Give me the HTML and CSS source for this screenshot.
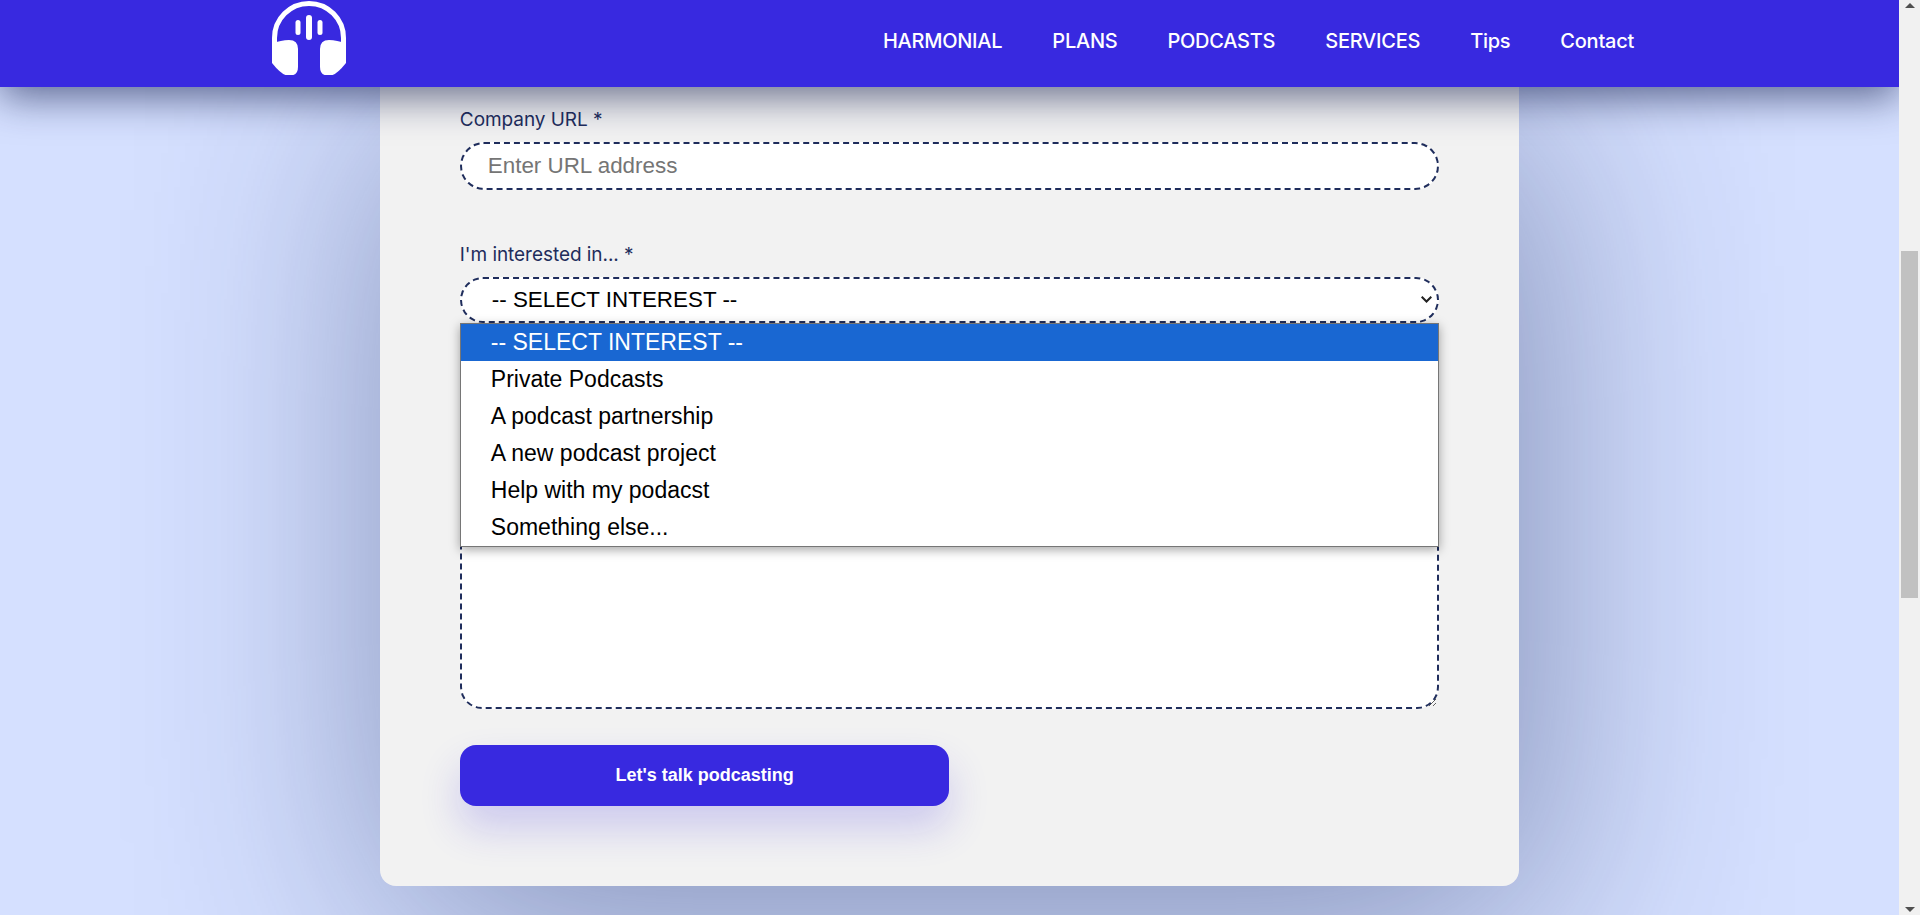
FILE: index.html
```html
<!DOCTYPE html>
<html lang="en">
<head>
<meta charset="utf-8">
<title>Harmonial - Contact</title>
<link rel="stylesheet" href="styles.css">
</head>
<body>
<div class="app">
  <div class="viewport">
    <header class="topbar">
      <a class="logo" href="#" aria-label="Harmonial">
        <svg width="74" height="74" viewBox="0 0 74 74" fill="#fff">
          <path d="M2.500 44V37a34.500 34.500 0 0 1 69 0V44" fill="none" stroke="#fff" stroke-width="5"/>
          <path d="M0 42.500Q9 39 17 39Q26 39 26 48V66Q26 74.500 18 74.500H16Q10 74.500 0 62Z"/>
          <path d="M74 42.500Q65 39 57 39Q48 39 48 48V66Q48 74.500 56 74.500H58Q64 74.500 74 62Z"/>
          <rect x="34" y="14" width="6" height="25" rx="3"/>
          <rect x="23.500" y="19" width="5" height="15" rx="2.500"/>
          <rect x="45.500" y="19" width="5" height="15" rx="2.500"/>
        </svg>
      </a>
      <nav class="nav">
        <a href="#">HARMONIAL</a>
        <a href="#">PLANS</a>
        <a href="#">PODCASTS</a>
        <a href="#">SERVICES</a>
        <a href="#">Tips</a>
        <a href="#">Contact</a>
      </nav>
    </header>
    <main class="content">
      <form class="card">
        <div class="field">
          <label class="label" for="url">Company URL *</label>
          <input class="control" id="url" type="text" placeholder="Enter URL address">
        </div>
        <div class="field field-select">
          <label class="label" for="interest">I'm interested in... *</label>
          <select class="control control-select" id="interest">
            <option>-- SELECT INTEREST --</option>
          </select>
          <svg class="chevron" width="11" height="7" viewBox="0 0 11 7" fill="none" stroke="#222" stroke-width="2"><path d="M.700 .700 5.500 5.500 10.300 .700"/></svg>
          <ul class="popup">
            <li class="selected">-- SELECT INTEREST --</li>
            <li>Private Podcasts</li>
            <li>A podcast partnership</li>
            <li>A new podcast project</li>
            <li>Help with my podacst</li>
            <li>Something else...</li>
          </ul>
        </div>
        <div class="field field-last">
          <textarea class="control control-area" aria-label="Message"></textarea>
        </div>
        <button class="submit" type="button">Let's talk podcasting</button>
      </form>
    </main>
  </div>
  <div class="scrollbar">
    <span class="arrow arrow-up"></span>
    <div class="track"><div class="thumb"></div></div>
    <span class="arrow arrow-down"></span>
  </div>
</div>
</body>
</html>
```

FILE: styles.css
```css
* { box-sizing: border-box; }
html, body { margin: 0; height: 915px; overflow: hidden; }
body { font-family: "Liberation Sans", Arial, sans-serif; background: #d5e0ff; }
.app { display: flex; height: 915px; }
.viewport { flex: 1; min-width: 0; overflow: hidden; display: flex; flex-direction: column; }

.topbar {
  position: relative;
  z-index: 2;
  flex: none;
  height: 87px;
  background: #3829e0;
  box-shadow: 0 10px 40px rgba(10, 20, 70, .6);
  display: flex;
  align-items: flex-start;
  justify-content: space-between;
  padding: 1px 265px 0 272px;
}
.logo { display: block; height: 74px; }
.logo svg { display: block; }
.nav { display: flex; gap: 50px; padding-top: 28px; }
.nav a {
  color: #fff;
  text-decoration: none;
  font-family: Inter, sans-serif;
  font-size: 20px;
  font-weight: 500;
  line-height: 24px;
  letter-spacing: -.25px;
}

.content { flex: 1; display: flex; justify-content: center; align-items: flex-start; }
.card {
  flex: none;
  width: 60%;
  background: #f2f2f2;
  border-radius: 0 0 16px 16px;
  padding: 20px 80px 80px;
  box-shadow: 15px 40px 250px rgba(30, 45, 95, .47);
}
.field { margin-bottom: 52px; }
.field-select { position: relative; margin-bottom: 87px; }
.field-last { margin-bottom: 36px; }
.label {
  display: block;
  height: 24px;
  margin-bottom: 11px;
  font-family: Inter, sans-serif;
  font-size: 19px;
  line-height: 26px;
  letter-spacing: -.05px;
  color: #1f2d5c;
}
.control {
  display: block;
  width: 100%;
  height: 48px;
  border: 2px dashed #1f2d5c;
  border-radius: 24px;
  background: #fff;
  padding: 0 26px;
  font-family: "Liberation Sans", Arial, sans-serif;
  font-size: 22.400px;
  color: #000;
  outline: none;
}
.control::placeholder { color: #757575; }
.control-select {
  height: 46px;
  padding: 0 0 2px 30px;
  appearance: none;
}
.chevron { position: absolute; right: 7px; top: 54px; pointer-events: none; }
.control-area { height: 299px; border-radius: 22px; }

.popup {
  position: absolute;
  left: 0;
  right: 0;
  top: 81px;
  z-index: 1;
  margin: 0;
  padding: 0;
  list-style: none;
  background: #fff;
  border: 1px solid #767676;
  box-shadow: 0 3px 10px rgba(0, 0, 0, .35);
  font-size: 23px;
}
.popup li { height: 37px; line-height: 37px; padding-left: 30px; color: #000; }
.popup .selected { background: #1967d2; color: #fff; }

.submit {
  display: block;
  width: 50%;
  height: 61px;
  border: 0;
  border-radius: 16px;
  background: #3829e0;
  color: #fff;
  font-family: "Liberation Sans", Arial, sans-serif;
  font-size: 18px;
  font-weight: 700;
  box-shadow: 0 22px 40px rgba(56, 41, 224, .2);
}

.scrollbar {
  flex: none;
  width: 21px;
  background: #f1f1f1;
  display: flex;
  flex-direction: column;
  align-items: center;
  padding: 3px 0;
  position: relative;
  z-index: 3;
}
.arrow { flex: none; width: 0; height: 0; border-left: 5px solid transparent; border-right: 5px solid transparent; }
.arrow-up { border-bottom: 5px solid #505050; }
.arrow-down { border-top: 5px solid #505050; }
.track { flex: 1; width: 100%; padding: 243px 2px 0; }
.thumb { height: 347px; background: #c1c1c1; }
```
